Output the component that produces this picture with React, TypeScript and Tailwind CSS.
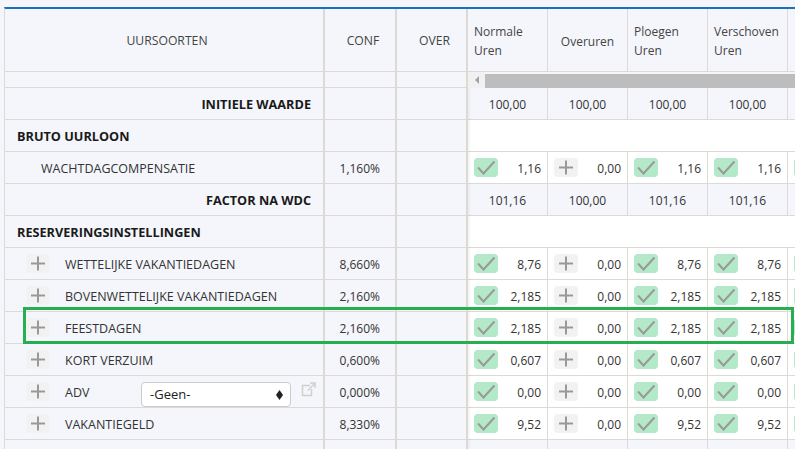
const DATA_COLS = [
  { label: ['Normale', 'Uren'] },
  { label: ['Overuren'], center: true },
  { label: ['Ploegen', 'Uren'] },
  { label: ['Verschoven', 'Uren'] },
];

type Row =
  | { kind: 'total'; label: string; values: string[] }
  | { kind: 'section'; label: string }
  | { kind: 'item'; label: string; conf: string; values: string[]; plus?: boolean; select?: boolean };

const ROWS: Row[] = [
  { kind: 'total', label: 'INITIELE WAARDE', values: ['100,00', '100,00', '100,00', '100,00'] },
  { kind: 'section', label: 'BRUTO UURLOON' },
  { kind: 'item', label: 'WACHTDAGCOMPENSATIE', conf: '1,160%', values: ['1,16', '0,00', '1,16', '1,16'] },
  { kind: 'total', label: 'FACTOR NA WDC', values: ['101,16', '100,00', '101,16', '101,16'] },
  { kind: 'section', label: 'RESERVERINGSINSTELLINGEN' },
  { kind: 'item', plus: true, label: 'WETTELIJKE VAKANTIEDAGEN', conf: '8,660%', values: ['8,76', '0,00', '8,76', '8,76'] },
  { kind: 'item', plus: true, label: 'BOVENWETTELIJKE VAKANTIEDAGEN', conf: '2,160%', values: ['2,185', '0,00', '2,185', '2,185'] },
  { kind: 'item', plus: true, label: 'FEESTDAGEN', conf: '2,160%', values: ['2,185', '0,00', '2,185', '2,185'] },
  { kind: 'item', plus: true, label: 'KORT VERZUIM', conf: '0,600%', values: ['0,607', '0,00', '0,607', '0,607'] },
  { kind: 'item', plus: true, select: true, label: 'ADV', conf: '0,000%', values: ['0,00', '0,00', '0,00', '0,00'] },
  { kind: 'item', plus: true, label: 'VAKANTIEGELD', conf: '8,330%', values: ['9,52', '0,00', '9,52', '9,52'] },
];

function PlusButton() {
  return (
    <span className="flex h-[19px] w-6 shrink-0 items-center justify-center rounded bg-[#f2f2f2]">
      <svg width="24" height="19" viewBox="0 0 24 19" fill="none" stroke="#999" strokeWidth="2">
        <path d="M12 2.5v14M5 9.5h14" />
      </svg>
    </span>
  );
}

function CheckButton() {
  return (
    <span className="flex h-[19px] w-6 shrink-0 items-center justify-center rounded bg-[#b3e8c9]">
      <svg width="24" height="19" viewBox="0 0 24 19" fill="none" stroke="#999" strokeWidth="2">
        <path d="M4 9.5l5.5 6L20.5 3.5" />
      </svg>
    </span>
  );
}

function TableRow({ row }: { row: Row }) {
  let first;
  if (row.kind === 'total') {
    first = <div className="w-full pr-3 pt-0.5 text-right text-[12.7px] font-bold text-[#1a1a1a]">{row.label}</div>;
  } else if (row.kind === 'section') {
    first = <div className="pl-3 pt-0.5 text-[12.7px] font-bold text-[#1a1a1a]">{row.label}</div>;
  } else if (row.plus) {
    first = (
      <div className="flex w-full items-center pl-[21px]">
        <PlusButton />
        <span className="ml-[15px] w-[76px] whitespace-nowrap pt-[3px]">{row.label}</span>
        {row.select && (
          <>
            <div className="mt-[5px] flex h-[25px] w-[150px] shrink-0 items-center justify-between rounded border border-[#cccccc] bg-white pl-[8px] pr-[7px] pt-px text-[13px] text-[#222]">
              -Geen-
              <svg width="7" height="10" viewBox="0 0 7 10" fill="#222">
                <path d="M3.5 0L7 5L3.5 10L0 5z" />
              </svg>
            </div>
            <svg className="mb-1 ml-[10px] shrink-0" width="15" height="15" viewBox="0 0 15 15" fill="none" stroke="#d0d0d0" strokeWidth="1.5">
              <path d="M9 3.5H1.5v10h9V7M7 8.5L13.5 1.5M9 1h5v5" />
            </svg>
          </>
        )}
      </div>
    );
  } else {
    first = <div className="pl-9 pt-[3px]">{row.label}</div>;
  }

  const values = row.kind === 'section' ? [] : row.values;

  return (
    <div className="flex h-8 border-b border-[#dcdad2]">
      <div className="flex w-[320px] shrink-0 items-center border-r-2 border-[#dcdad2]">
        <div className="flex w-full items-center">{first}</div>
      </div>
      <div className="flex w-[72px] shrink-0 items-center justify-end border-r-2 border-[#dcdad2] pr-[15px] pt-0.5 text-xs">
        {row.kind === 'item' ? row.conf : ''}
      </div>
      <div className="w-[71px] shrink-0 border-r-2 border-[#dcdad2]" />
      {row.kind === 'section' ? (
        <div className="flex-1 bg-white" />
      ) : (
        <div className={`flex flex-1 text-xs ${row.kind === 'item' ? 'bg-white' : ''}`}>
          {values.map((value, i) => (
            <div
              key={i}
              className={`flex w-20 shrink-0 items-center border-r border-[#dcdad2] ${
                row.kind === 'item' ? 'justify-between px-[6px]' : 'justify-center'
              }`}
            >
              {row.kind === 'item' && (i === 1 ? <PlusButton /> : <CheckButton />)}
              <span className="pt-0.5">{value}</span>
            </div>
          ))}
          {row.kind === 'item' && (
            <div className="flex flex-1 items-center overflow-hidden pl-[6px]">
              <span className="flex h-[19px] w-6 shrink-0 rounded bg-[#b3e8c9]" />
            </div>
          )}
        </div>
      )}
    </div>
  );
}

export default function App() {
  return (
    <div className="relative h-[449px] w-[795px] overflow-hidden bg-[#f4f6fb] pt-[7px] pl-1 font-['Open_Sans','Noto_Sans',sans-serif] text-[12.5px] text-[#333]">
      <div className="border-t-2 border-l border-[#dcdad2] border-t-[#1c71b8]">
        {/* header */}
        <div className="flex h-[63px] border-b border-[#dcdad2]">
          <div className="flex w-[320px] shrink-0 items-center justify-center border-r-2 border-[#dcdad2] pl-[6px] pt-0.5 text-[12.2px] text-[#444]">
            UURSOORTEN
          </div>
          <div className="flex w-[72px] shrink-0 items-center justify-center border-r-2 border-[#dcdad2] pl-[6px] pt-0.5 text-[12.2px] text-[#444]">
            CONF
          </div>
          <div className="flex w-[71px] shrink-0 items-center justify-center border-r-2 border-[#dcdad2] pl-[6px] pt-0.5 text-[12.2px] text-[#444]">
            OVER
          </div>
          {DATA_COLS.map((col) => (
            <div
              key={col.label[0]}
              className={`flex w-20 shrink-0 flex-col justify-center border-r border-[#dcdad2] pt-0.5 text-xs leading-[19px] text-[#444] ${
                col.center ? 'items-center' : 'pl-[6px]'
              }`}
            >
              {col.label.map((line) => (
                <span key={line}>{line}</span>
              ))}
            </div>
          ))}
        </div>

        {/* scrollbar row */}
        <div className="flex h-4">
          <div className="w-[320px] shrink-0 border-r-2 border-b border-[#dcdad2]" />
          <div className="w-[72px] shrink-0 border-r-2 border-b border-[#dcdad2]" />
          <div className="w-[71px] shrink-0 border-r-2 border-b border-[#dcdad2]" />
          <div className="flex flex-1">
            <div className="flex h-4 w-[17px] shrink-0 items-center justify-center bg-[#f1f1f1]">
              <span className="h-0 w-0 border-y-4 border-r-4 border-y-transparent border-r-[#a3a3a3]" />
            </div>
            <div className="mt-0.5 h-[14px] flex-1 bg-[#bdbdbd]" />
          </div>
        </div>

        {ROWS.map((row) => (
          <TableRow key={row.label} row={row} />
        ))}

        {/* start of the next row, cut off by the window */}
        <div className="flex h-3">
          <div className="w-[320px] shrink-0 border-r-2 border-[#dcdad2]" />
          <div className="w-[72px] shrink-0 border-r-2 border-[#dcdad2]" />
          <div className="w-[71px] shrink-0 border-r-2 border-[#dcdad2]" />
          {DATA_COLS.map((col) => (
            <div key={col.label[0]} className="w-20 shrink-0 border-r border-[#dcdad2]" />
          ))}
        </div>
      </div>

      {/* shadow cast by the frozen columns */}
      <div className="absolute top-[88px] bottom-0 left-[468px] w-[3px] bg-gradient-to-r from-black/5 to-transparent" />

      {/* green highlight over the Feestdagen row */}
      <div className="absolute top-[307px] left-[23px] h-[37px] w-[771px] border-[3px] border-[#27ae50]" />
    </div>
  );
}
